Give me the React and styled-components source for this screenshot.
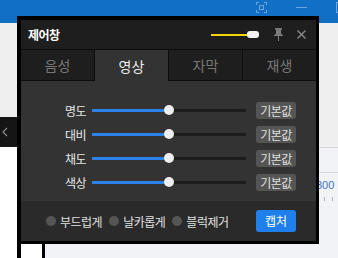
import React from 'react'
import styled, { createGlobalStyle } from 'styled-components'

const Global = createGlobalStyle`
  html, body { margin: 0; padding: 0; background: #efefef; }
  body { font-family: "Noto Sans CJK KR", "Noto Sans", sans-serif; }
`

const Page = styled.div`
  position: relative;
  width: 338px;
  height: 258px;
  overflow: hidden;
  display: flex;
  flex-direction: column;
  background: #efefef;
`

const TopBar = styled.div`
  height: 23px;
  flex: none;
  background: #1270c4;
  position: relative;
`

const TopIcon = styled.svg`
  position: absolute;
  top: 2px;
  left: ${p => p.x}px;
`

const Desk = styled.div`
  flex: 1;
  display: flex;
`

const LeftRail = styled.div`
  width: 17px;
  display: flex;
  flex-direction: column;
  background: #fff;
`

const RailGap = styled.div`
  height: 94px;
  background: #efefef;
`

const DarkTab = styled.div`
  height: 30px;
  background: #151515;
  display: flex;
  align-items: center;
  padding-left: 1px;
`

const Middle = styled.div`
  width: 302px;
  display: flex;
  flex-direction: column;
`

const MiddleTop = styled.div`
  height: 221px;
  background: #efefef;
`

const MiddleBottom = styled.div`
  flex: 1;
  display: flex;
  border-left: 4px solid #000;
  background: #f2f3f7;
`

const WhiteCol = styled.div`
  width: 21px;
  background: #fff;
  border-right: 3px solid #000;
`

const RightRail = styled.div`
  flex: 1;
  display: flex;
  flex-direction: column;
`

const RightTop = styled.div`
  height: 124px;
  background: #efefef;
  border-bottom: 1px solid #d8d8dc;
`

const Ruler = styled.div`
  flex: 1;
  background: #f2f3f7;
  padding-top: 24px;
  position: relative;
`

const RulerLine = styled.div`
  border-top: 1px solid #d4d6de;
  height: 6px;
`

const RulerText = styled.div`
  font-family: "Liberation Sans", sans-serif;
  font-size: 11px;
  color: #3d74c8;
  line-height: 12px;
  margin-left: -3px;
`

const Ticks = styled.div`
  display: flex;
  gap: 7px;
  padding-left: 5px;
  margin-top: 6px;
  & > i {
    width: 1px;
    height: 4px;
    background: #a8b4cc;
  }
`

const Dialog = styled.div`
  position: absolute;
  left: 17px;
  top: 16px;
  width: 295px;
  height: 221px;
  border-style: solid;
  border-color: #000;
  border-width: 4px 3px 3px 4px;
  display: flex;
  flex-direction: column;
  background: #333;
`

const TitleBar = styled.div`
  height: 29px;
  flex: none;
  background: #1e1e1e;
  border-bottom: 1px solid #0c0c0c;
  display: flex;
  align-items: center;
  padding: 0 10px 0 7px;
`

const Title = styled.div`
  color: #fff;
  font-size: 12px;
  font-weight: 700;
  flex: 1;
  letter-spacing: -0.5px;
`

const Opacity = styled.div`
  position: relative;
  width: 48px;
  height: 8px;
  margin-right: 14px;
  display: flex;
  align-items: center;
  &::before {
    content: '';
    width: 40px;
    height: 2px;
    background: #f2d400;
  }
  &::after {
    content: '';
    position: absolute;
    right: 0;
    top: 0;
    width: 12px;
    height: 7px;
    border-radius: 3px;
    background: #f2f2f2;
  }
`

const IconBtn = styled.svg`
  display: block;
  margin-left: ${p => p.ml || 0}px;
`

const Tabs = styled.div`
  height: 31px;
  flex: none;
  display: flex;
  background: #0c0c0c;
  gap: 1px;
`

const Tab = styled.div`
  flex: 1;
  display: flex;
  align-items: center;
  justify-content: center;
  font-size: 14px;
  color: ${p => (p.active ? '#eeeeee' : '#777777')};
  background: ${p => (p.active ? '#333333' : '#1e1e1e')};
  height: ${p => (p.active ? 31 : 30)}px;
`

const Content = styled.div`
  height: 120px;
  flex: none;
  padding-top: 17px;
  box-sizing: border-box;
  background: #333;
`

const Row = styled.div`
  height: 24px;
  display: grid;
  grid-template-columns: 65px 154px 40px;
  column-gap: 0;
  align-items: center;
  & > :nth-child(2) { margin-left: 6px; }
  & > :nth-child(3) { margin-left: 16px; }
`

const Label = styled.div`
  text-align: right;
  color: #e8e8e8;
  font-size: 12px;
  letter-spacing: -0.5px;
`

const Track = styled.div`
  position: relative;
  width: 154px;
  height: 3px;
  background: #1c1c1c;
`

const Fill = styled.div`
  height: 100%;
  background: #2a82ea;
`

const Thumb = styled.div`
  position: absolute;
  top: 50%;
  width: 10px;
  height: 10px;
  margin: -5px 0 0 -5px;
  border-radius: 50%;
  background: #eeeeee;
`

const ResetBtn = styled.div`
  width: 40px;
  height: 17px;
  border-radius: 3px;
  background: #555;
  color: #e0e0e0;
  font-size: 12px;
  line-height: 17px;
  text-align: center;
  letter-spacing: -0.5px;
`

const Footer = styled.div`
  flex: 1;
  background: #2a2a2a;
  display: flex;
  align-items: center;
  padding: 0 20px 0 25px;
`

const Option = styled.div`
  display: flex;
  align-items: center;
  gap: 4px;
  margin-right: 7px;
  color: #e0e0e0;
  font-size: 12px;
  letter-spacing: -0.5px;
  &::before {
    content: '';
    width: 10px;
    height: 10px;
    border-radius: 50%;
    background: #555;
  }
`

const Capture = styled.div`
  margin-left: auto;
  width: 40px;
  height: 22px;
  border-radius: 3px;
  background: #1f80ec;
  color: #fff;
  font-size: 12px;
  line-height: 22px;
  text-align: center;
`

const rows = [
  { label: '명도', value: 50 },
  { label: '대비', value: 50 },
  { label: '채도', value: 50 },
  { label: '색상', value: 50 },
]

const tabs = ['음성', '영상', '자막', '재생']
const options = ['부드럽게', '날카롭게', '블럭제거']

export default function App() {
  return (
    <Page>
      <Global />
      <TopBar>
        <TopIcon x={256} width="11" height="11" viewBox="0 0 11 11" fill="none" stroke="#6fa4e4" strokeWidth="1">
          <path d="M0.5 3V0.5H3M8 0.5H10.5V3M10.5 8V10.5H8M3 10.5H0.5V8" />
          <rect x="3.5" y="3.5" width="4" height="4" />
        </TopIcon>
        <TopIcon x={296} width="11" height="11" viewBox="0 0 11 11" fill="none" stroke="#6fa4e4" strokeWidth="1">
          <path d="M0 5.5H11" />
        </TopIcon>
        <TopIcon x={336} width="11" height="11" viewBox="0 0 11 11" fill="none" stroke="#6fa4e4" strokeWidth="1">
          <rect x="0.5" y="0.5" width="10" height="10" />
        </TopIcon>
      </TopBar>
      <Desk>
        <LeftRail>
          <RailGap />
          <DarkTab>
            <svg width="7" height="10" viewBox="0 0 7 10" fill="none" stroke="#8a8a8a" strokeWidth="1.2">
              <path d="M6 1L2 5L6 9" />
            </svg>
          </DarkTab>
        </LeftRail>
        <Middle>
          <MiddleTop />
          <MiddleBottom>
            <WhiteCol />
          </MiddleBottom>
        </Middle>
        <RightRail>
          <RightTop />
          <Ruler>
            <RulerLine />
            <RulerText>300</RulerText>
            <Ticks><i /><i /></Ticks>
          </Ruler>
        </RightRail>
      </Desk>

      <Dialog>
        <TitleBar>
          <Title>제어창</Title>
          <Opacity />
          <IconBtn width="11" height="13" viewBox="0 0 11 13" fill="#7a7a7a">
            <path d="M2 0H9V1.5L8 2V5.5L10.5 8H6V13H5V8H0.5L3 5.5V2L2 1.5Z" />
          </IconBtn>
          <IconBtn ml={13} width="9" height="9" viewBox="0 0 9 9" fill="none" stroke="#8a8a8a" strokeWidth="1.4">
            <path d="M0.5 0.5L8.5 8.5M8.5 0.5L0.5 8.5" />
          </IconBtn>
        </TitleBar>
        <Tabs>
          {tabs.map(t => (
            <Tab key={t} active={t === '영상'}>{t}</Tab>
          ))}
        </Tabs>
        <Content>
          {rows.map(r => (
            <Row key={r.label}>
              <Label>{r.label}</Label>
              <Track>
                <Fill style={{ width: `${r.value}%` }} />
                <Thumb style={{ left: `${r.value}%` }} />
              </Track>
              <ResetBtn>기본값</ResetBtn>
            </Row>
          ))}
        </Content>
        <Footer>
          {options.map(o => (
            <Option key={o}>{o}</Option>
          ))}
          <Capture>캡처</Capture>
        </Footer>
      </Dialog>
    </Page>
  )
}
